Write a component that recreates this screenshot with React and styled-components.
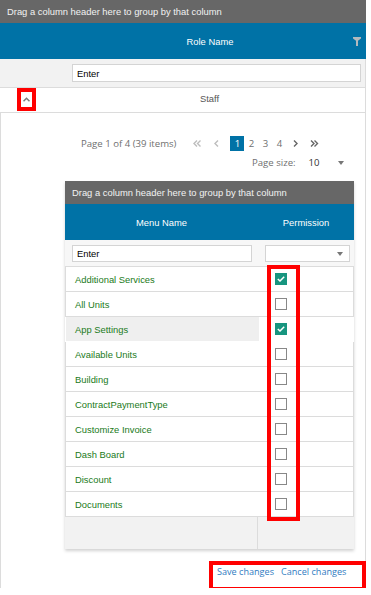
import React from 'react';
import styled, { createGlobalStyle } from 'styled-components';

const GlobalStyle = createGlobalStyle`
  html, body {
    margin: 0;
    padding: 0;
    background: #fff;
  }
  body {
    font-family: "Liberation Sans", Arial, sans-serif;
  }
`;

const Grid = styled.div`
  width: 366px;
  font-size: 9.4px;
  color: #333;
`;

const GroupPanel = styled.div`
  height: 23px;
  line-height: 23px;
  padding-left: 7px;
  background: #676767;
  color: #f2f2f2;
  white-space: nowrap;
`;

const HeaderRow = styled.div`
  display: grid;
  grid-template-columns: ${(p) => p.$cols};
  height: 36px;
  background: #0072a6;
  color: #fff;
`;

const HeaderCell = styled.div`
  display: grid;
  grid-template-columns: 1fr auto 1fr;
  align-items: center;
`;

const HeaderText = styled.span`
  grid-column: 2;
`;

const FilterIcon = styled.svg`
  grid-column: 3;
  justify-self: end;
  margin-right: 5px;
`;

const FilterRow = styled.div`
  display: grid;
  grid-template-columns: ${(p) => p.$cols};
  height: ${(p) => p.$h}px;
  box-sizing: border-box;
  background: ${(p) => p.$bg};
  border-bottom: 1px solid #dcdcdc;
  border-right: ${(p) => (p.$edge ? '1px solid #dcdcdc' : 'none')};
`;

const FilterCell = styled.div`
  padding: ${(p) => p.$pad};
`;

const FilterInput = styled.input`
  display: block;
  width: 100%;
  height: ${(p) => p.$h}px;
  box-sizing: border-box;
  border: 1px solid #d4d4d4;
  background: #fff;
  padding: 0 4px;
  font: inherit;
  color: #000;
  outline: none;
`;

const SelectBox = styled.div`
  position: relative;
  height: 17px;
  box-sizing: border-box;
  border: 1px solid #d4d4d4;
  background: #fff;
`;

const SelectArrow = styled.span`
  position: absolute;
  right: 6px;
  top: 6px;
  border-top: 4px solid #777;
  border-left: 3.5px solid transparent;
  border-right: 3.5px solid transparent;
`;

const GroupRow = styled.div`
  display: grid;
  grid-template-columns: 54px 1fr;
  align-items: start;
  height: 25px;
  box-sizing: border-box;
  border-bottom: 1px solid #dcdcdc;
  border-right: 1px solid #dcdcdc;
`;

const ExpandButton = styled.div`
  display: flex;
  align-items: center;
  justify-content: center;
  width: 19px;
  height: 23px;
  margin-left: 17px;
  box-sizing: border-box;
  border: 4px solid #f00;
  background: #fff;
`;

const GroupText = styled.div`
  display: flex;
  align-items: center;
  justify-content: center;
  height: 20px;
  color: #555;
`;

const Detail = styled.div`
  border-left: 1px solid #dcdcdc;
  border-right: 1px solid #dcdcdc;
  padding-top: 23px;
  margin-bottom: -3px;
`;

const PagerRow = styled.div`
  display: flex;
  align-items: center;
  height: 15px;
  padding-left: ${(p) => p.$indent}px;
  margin-top: ${(p) => p.$top || 0}px;
  font-family: "Open Sans", sans-serif;
  font-size: 9.6px;
  color: #6f6f6f;
`;

const PagerInfo = styled.span`
  margin-right: 12px;
`;

const NavButton = styled.span`
  display: flex;
  align-items: center;
  justify-content: center;
  width: 19px;
  height: 15px;
`;

const PageNumbers = styled.div`
  display: flex;
  margin-left: 4px;
`;

const PageNum = styled.span`
  display: flex;
  align-items: center;
  justify-content: center;
  width: 14px;
  height: 15px;
  background: ${(p) => (p.$active ? '#0072a6' : 'transparent')};
  color: ${(p) => (p.$active ? '#fff' : '#6f6f6f')};
`;

const PageSizeValue = styled.span`
  margin-left: 13px;
  color: #333;
`;

const PageSizeArrow = styled.span`
  margin-left: 18px;
  border-top: 4px solid #777;
  border-left: 3.5px solid transparent;
  border-right: 3.5px solid transparent;
`;

const InnerGrid = styled.div`
  width: 289px;
  margin: 11px 0 0 64px;
  box-shadow: 0 2px 3px rgba(0, 0, 0, 0.18);
`;

const Rows = styled.div`
  position: relative;
`;

const Row = styled.div`
  display: grid;
  grid-template-columns: 193px 1fr;
  height: 25px;
  box-sizing: border-box;
  border: 1px solid ${(p) => (p.$active ? 'transparent' : '#dcdcdc')};
  border-top: none;
`;

const MenuCell = styled.div`
  display: flex;
  align-items: center;
  padding-left: 9px;
  background: ${(p) => (p.$active ? '#efefef' : 'transparent')};
  color: #1a7a1a;
`;

const PermCell = styled.div`
  display: flex;
  align-items: center;
  padding-left: 16px;
`;

const CheckBox = styled.span`
  display: flex;
  align-items: center;
  justify-content: center;
  width: 12px;
  height: 12px;
  box-sizing: border-box;
  background: ${(p) => (p.$checked ? '#17957f' : '#fff')};
  border: ${(p) => (p.$checked ? 'none' : '1px solid #888')};
`;

const Highlight = styled.div`
  position: absolute;
  top: -2px;
  left: 202px;
  width: 33px;
  height: 256px;
  box-sizing: border-box;
  border: 4px solid #f00;
  pointer-events: none;
`;

const Footer = styled.div`
  display: grid;
  grid-template-columns: 193px 1fr;
  height: 32px;
  background: #f2f2f2;
`;

const FooterCell = styled.div`
  border-right: ${(p) => (p.$divider ? '1px solid #dcdcdc' : 'none')};
`;

const SaveBar = styled.div`
  display: flex;
  justify-content: flex-end;
  margin: 12px -1px 0 0;
`;

const SaveBox = styled.div`
  display: flex;
  gap: 7px;
  width: 157px;
  height: 30px;
  box-sizing: border-box;
  border: 4px solid #f00;
  padding-left: 4px;
  font-family: "Open Sans", sans-serif;
  font-size: 9.1px;
  line-height: 13px;
`;

const LinkText = styled.span`
  color: #2f7bbf;
`;

const menus = [
  { name: 'Additional Services', checked: true },
  { name: 'All Units' },
  { name: 'App Settings', checked: true, active: true },
  { name: 'Available Units' },
  { name: 'Building' },
  { name: 'ContractPaymentType' },
  { name: 'Customize Invoice' },
  { name: 'Dash Board' },
  { name: 'Discount' },
  { name: 'Documents' },
];

const Chevron = ({ dir, color, double }) => {
  const left = dir === 'left';
  const pts = (x) => (left ? `${x + 3},0.5 ${x},3.5 ${x + 3},6.5` : `${x},0.5 ${x + 3},3.5 ${x},6.5`);
  return (
    <svg width={double ? 9 : 5} height="7" viewBox={`0 0 ${double ? 9 : 5} 7`}>
      <polyline points={pts(1)} fill="none" stroke={color} strokeWidth="1.4" />
      {double && <polyline points={pts(4.5)} fill="none" stroke={color} strokeWidth="1.4" />}
    </svg>
  );
};

export default function App() {
  return (
    <Grid>
      <GlobalStyle />
      <GroupPanel>Drag a column header here to group by that column</GroupPanel>
      <HeaderRow $cols="54px 1fr">
        <div />
        <HeaderCell>
          <HeaderText>Role Name</HeaderText>
          <FilterIcon width="8" height="9" viewBox="0 0 8 9">
            <path d="M0 0H8V1.6L5 3.8V9H3V3.8L0 1.6Z" fill="#b4b9bd" />
          </FilterIcon>
        </HeaderCell>
      </HeaderRow>
      <FilterRow $cols="54px 1fr" $h={29} $bg="#f2f2f2" $edge>
        <div />
        <FilterCell $pad="5px 4px 0 18px">
          <FilterInput $h={18} value="Enter" readOnly />
        </FilterCell>
      </FilterRow>
      <GroupRow>
        <ExpandButton>
          <svg width="7" height="5" viewBox="0 0 7 5">
            <polyline points="0.5,4.3 3.5,1.3 6.5,4.3" fill="none" stroke="#7a7a7a" strokeWidth="1.5" />
          </svg>
        </ExpandButton>
        <GroupText>Staff</GroupText>
      </GroupRow>

      <Detail>
        <PagerRow $indent={80}>
          <PagerInfo>Page 1 of 4 (39 items)</PagerInfo>
          <NavButton><Chevron dir="left" color="#bdbdbd" double /></NavButton>
          <NavButton><Chevron dir="left" color="#bdbdbd" /></NavButton>
          <PageNumbers>
            {[1, 2, 3, 4].map((n) => (
              <PageNum key={n} $active={n === 1}>{n}</PageNum>
            ))}
          </PageNumbers>
          <NavButton><Chevron dir="right" color="#666" /></NavButton>
          <NavButton><Chevron dir="right" color="#666" double /></NavButton>
        </PagerRow>
        <PagerRow $indent={251} $top={4}>
          <span>Page size:</span>
          <PageSizeValue>10</PageSizeValue>
          <PageSizeArrow />
        </PagerRow>

        <InnerGrid>
          <GroupPanel>Drag a column header here to group by that column</GroupPanel>
          <HeaderRow $cols="193px 1fr">
            <HeaderCell><HeaderText>Menu Name</HeaderText></HeaderCell>
            <HeaderCell><HeaderText>Permission</HeaderText></HeaderCell>
          </HeaderRow>
          <FilterRow $cols="193px 1fr" $h={27} $bg="#f7f7f7">
            <FilterCell $pad="5px 6px 0 7px">
              <FilterInput $h={17} value="Enter" readOnly />
            </FilterCell>
            <FilterCell $pad="5px 4px 0 7px">
              <SelectBox><SelectArrow /></SelectBox>
            </FilterCell>
          </FilterRow>
          <Rows>
            {menus.map((m) => (
              <Row key={m.name} $active={m.active}>
                <MenuCell $active={m.active}>{m.name}</MenuCell>
                <PermCell>
                  <CheckBox $checked={m.checked}>
                    {m.checked && (
                      <svg width="8" height="6" viewBox="0 0 8 6">
                        <polyline points="0.8,3 3,5 7.2,0.8" fill="none" stroke="#fff" strokeWidth="1.5" />
                      </svg>
                    )}
                  </CheckBox>
                </PermCell>
              </Row>
            ))}
            <Highlight />
          </Rows>
          <Footer>
            <FooterCell $divider />
            <FooterCell />
          </Footer>
        </InnerGrid>

        <SaveBar>
          <SaveBox>
            <LinkText>Save changes</LinkText>
            <LinkText>Cancel changes</LinkText>
          </SaveBox>
        </SaveBar>
      </Detail>
    </Grid>
  );
}
